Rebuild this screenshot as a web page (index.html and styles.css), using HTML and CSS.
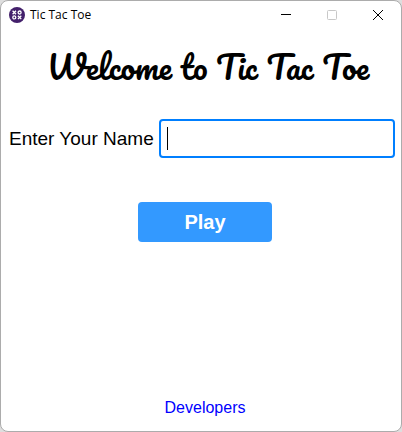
FILE: index.html
```html
<!DOCTYPE html>
<html lang="en">
<head>
<meta charset="utf-8">
<title>Tic Tac Toe</title>
<link rel="stylesheet" href="styles.css">
</head>
<body>
<div class="window">
  <header class="titlebar">
    <svg class="app-icon" viewBox="0 0 16 16" aria-hidden="true">
      <circle cx="8" cy="8" r="8" fill="#43206b"/>
      <g fill="none" stroke="#fff" stroke-width="1.3">
        <path d="M3.6 3.8l3.4 3.4M7 3.8l-3.4 3.4M8.9 8.7l3.4 3.4M12.3 8.7l-3.4 3.4"/>
        <circle cx="10.6" cy="5.5" r="1.5"/>
        <circle cx="5.3" cy="10.4" r="1.5"/>
      </g>
    </svg>
    <span class="app-name">Tic Tac Toe</span>
    <button class="control" type="button" aria-label="Minimize">
      <svg viewBox="0 0 10 10"><path d="M0 4.5h10"/></svg>
    </button>
    <button class="control" type="button" aria-label="Maximize" disabled>
      <svg viewBox="0 0 10 10"><rect x=".5" y=".5" width="9" height="9" rx="1"/></svg>
    </button>
    <button class="control" type="button" aria-label="Close">
      <svg viewBox="0 0 10 10"><path d="M0 0l10 10M10 0L0 10"/></svg>
    </button>
  </header>
  <main class="content">
    <h1 class="heading">Welcome to Tic Tac Toe</h1>
    <form class="form">
      <div class="field">
        <label for="name">Enter Your Name</label>
        <input id="name" type="text" autocomplete="off">
      </div>
      <button class="play" type="button">Play</button>
    </form>
    <a class="developers" href="#developers">Developers</a>
  </main>
</div>
</body>
</html>
```
FILE: styles.css
```css
* {
  box-sizing: border-box;
}

body {
  margin: 0;
  background: #dedede;
  font-family: "Liberation Sans", Arial, sans-serif;
  color: #000;
}

.window {
  display: flex;
  flex-direction: column;
  min-height: 100vh;
  border: 1px solid #acacac;
  border-radius: 8px;
  background: #fff;
  overflow: hidden;
}

.titlebar {
  display: flex;
  align-items: center;
  height: 28px;
  padding-left: 8px;
}

.app-icon {
  width: 16px;
  height: 16px;
  margin-right: 5px;
}

.app-name {
  flex: 1;
  font: 12px/16px "Segoe UI", "Open Sans", sans-serif;
}

.control {
  display: flex;
  align-items: center;
  justify-content: center;
  width: 46px;
  height: 28px;
  padding: 0;
  border: 0;
  background: none;
  color: #000;
}

.control:disabled {
  color: #c8c8c8;
}

.control svg {
  width: 10px;
  height: 10px;
  overflow: visible;
  fill: none;
  stroke: currentColor;
  stroke-width: 1;
}

.content {
  display: flex;
  flex: 1;
  flex-direction: column;
  align-items: center;
  padding: 13px 0 13px 8px;
}

.heading {
  margin: 0;
  padding-left: 6px;
  font: 400 32px/48px Pacifico, cursive;
  white-space: nowrap;
}

.form {
  display: flex;
  flex-direction: column;
  align-items: center;
  gap: 44px;
  width: 100%;
  margin-top: 29px;
}

.field {
  display: flex;
  align-items: center;
  gap: 5px;
  width: 100%;
  padding-right: 6px;
  font-size: 19px;
}

.field label {
  white-space: nowrap;
}

.field input {
  flex: 1;
  min-width: 0;
  height: 39px;
  padding: 0 6px;
  border: 2px solid #007fff;
  border-radius: 4px;
  outline: 0;
  background: linear-gradient(#000, #000) 6px center / 1px 23px no-repeat #fff;
  font: inherit;
}

.play {
  width: 134px;
  height: 40px;
  padding: 0;
  border: 0;
  border-radius: 4px;
  background: #3399ff;
  color: #fff;
  font: bold 20px/24px "Liberation Sans", Arial, sans-serif;
}

.developers {
  margin-top: auto;
  color: #00f;
  font-size: 16px;
  line-height: 20px;
  text-decoration: none;
}
```
